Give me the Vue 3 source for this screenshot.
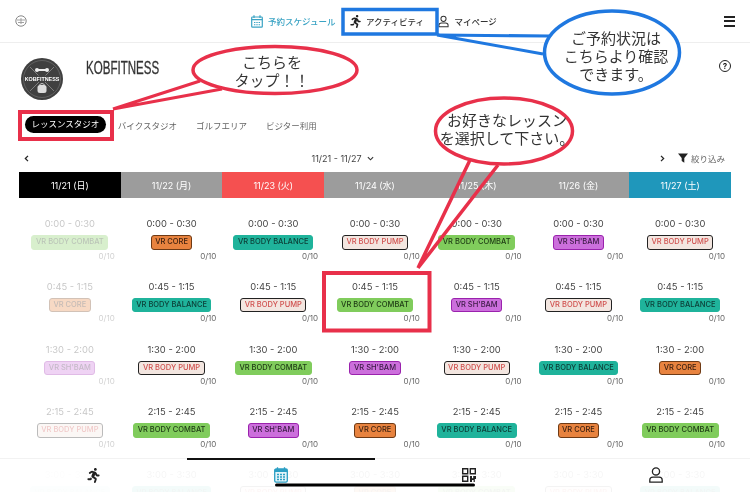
<script setup>
const tabs = ['バイクスタジオ', 'ゴルフエリア', 'ビジター利用'];

const days = [
  { label: '11/21 (日)', color: '#000000' },
  { label: '11/22 (月)', color: '#9c9c9c' },
  { label: '11/23 (火)', color: '#f55050' },
  { label: '11/24 (水)', color: '#9c9c9c' },
  { label: '11/25 (木)', color: '#9c9c9c' },
  { label: '11/26 (金)', color: '#9c9c9c' },
  { label: '11/27 (土)', color: '#1f97bb' }
];

const lessons = {
  combat: { name: 'VR BODY COMBAT', cls: 'combat' },
  core: { name: 'VR CORE', cls: 'core' },
  balance: { name: 'VR BODY BALANCE', cls: 'balance' },
  pump: { name: 'VR BODY PUMP', cls: 'pump' },
  shbam: { name: "VR SH'BAM", cls: 'shbam' }
};

const rows = [
  { time: '0:00 - 0:30', items: ['combat', 'core', 'balance', 'pump', 'combat', 'shbam', 'pump'] },
  { time: '0:45 - 1:15', items: ['core', 'balance', 'pump', 'combat', 'shbam', 'pump', 'balance'] },
  { time: '1:30 - 2:00', items: ['shbam', 'pump', 'combat', 'shbam', 'pump', 'balance', 'core'] },
  { time: '2:15 - 2:45', items: ['pump', 'combat', 'shbam', 'core', 'balance', 'core', 'combat'] },
  { time: '3:00 - 3:30', items: ['balance', 'balance', 'pump', 'core', 'combat', 'pump', 'balance'] }
];

const runner = 'M272 96c26.51 0 48-21.49 48-48S298.51 0 272 0s-48 21.49-48 48 21.49 48 48 48zM113.69 317.47l-14.8 34.52H32c-17.67 0-32 14.33-32 32s14.33 32 32 32h77.45c19.25 0 36.58-11.44 44.11-29.09l8.79-20.52-10.67-6.3c-17.32-10.23-30.06-25.37-37.99-42.61zM384 223.99h-44.03l-26.06-53.25c-12.5-25.55-35.45-44.23-61.78-50.94l-71.08-21.14c-28.3-6.8-57.77-.55-80.84 17.14l-39.67 30.41c-14.03 10.75-16.69 30.83-5.92 44.86s30.84 16.66 44.86 5.92l39.69-30.41c7.67-5.89 17.44-8 25.27-6.14l14.7 4.37-37.46 87.39c-12.62 29.48-1.31 64.01 26.3 80.31l84.98 50.17-27.47 87.73c-5.28 16.86 4.11 34.81 20.97 40.09 3.19 1 6.41 1.48 9.58 1.48 13.61 0 26.23-8.77 30.52-22.45l31.64-101.06c5.91-20.77-2.89-43.08-21.64-54.39l-61.24-36.14 31.31-78.28 20.27 41.43c8 16.34 24.92 26.89 43.11 26.89H384c17.67 0 32-14.33 32-32s-14.33-31.99-32-31.99z';
</script>

<template>
  <div class="page">
    <header class="topbar">
      <svg class="top-logo" viewBox="0 0 12 12" width="12" height="12">
        <circle cx="6" cy="6" r="5.2" fill="#fff" stroke="#888" stroke-width="1" />
        <path d="M2 5h8M3 7.5h6M6 3v6" stroke="#999" stroke-width="0.9" fill="none" />
      </svg>
      <nav class="topnav">
        <a class="navlink active">
          <svg viewBox="0 0 12 13" width="12" height="13">
            <rect x="0.7" y="2" width="10.6" height="10.2" rx="0.8" fill="none" stroke="#3aa3c4" stroke-width="1.2" />
            <path d="M3 0.3v2.6M9 0.3v2.6M0.7 4.6h10.6" stroke="#3aa3c4" stroke-width="1.2" />
            <path d="M3 7.5h1.4M5.3 7.5h1.4M7.6 7.5h1.4M3 9.8h1.4M5.3 9.8h1.4M7.6 9.8h1.4" stroke="#3aa3c4" stroke-width="1.1" />
          </svg>
          <span>予約スケジュール</span>
        </a>
        <a class="navlink">
          <svg viewBox="0 0 416 512" width="11" height="13"><path :d="runner" fill="#222" /></svg>
          <span>アクティビティ</span>
        </a>
        <a class="navlink">
          <svg viewBox="0 0 12 13" width="11" height="13">
            <circle cx="6" cy="3.6" r="2.8" fill="none" stroke="#333" stroke-width="1.1" />
            <path d="M1 12.3v-1.6c0-1.7 1.3-2.6 2.8-2.6h4.4c1.5 0 2.8 0.9 2.8 2.6v1.6z" fill="none" stroke="#333" stroke-width="1.1" />
          </svg>
          <span>マイページ</span>
        </a>
      </nav>
      <div class="burger"><i></i><i></i><i></i></div>
    </header>

    <section class="profile">
      <svg class="logo" viewBox="0 0 42 42" width="42" height="42">
        <circle cx="21" cy="21" r="21" fill="#404040" />
        <circle cx="21" cy="21" r="18.5" fill="none" stroke="#808080" stroke-width="0.5" />
        <path d="M9 9l24 24M33 9L9 33" stroke="#aaa" stroke-width="0.6" />
        <rect x="15" y="11" width="12" height="2" fill="#eee" />
        <circle cx="16" cy="12" r="2" fill="#eee" />
        <circle cx="26" cy="12" r="2" fill="#eee" />
        <rect x="3" y="17.5" width="36" height="6.5" fill="#404040" />
        <text x="21" y="23" text-anchor="middle" class="logo-text">KOBFITNESS</text>
        <path d="M18.5 27.5c0-2.5 5-2.5 5 0" fill="none" stroke="#ddd" stroke-width="1" />
        <rect x="16.5" y="27" width="9" height="8" rx="2.5" fill="#ddd" />
      </svg>
      <h1 class="brand">KOBFITNESS</h1>
      <div class="help">?</div>
    </section>

    <div class="tabs">
      <span class="tab selected">レッスンスタジオ</span>
      <span v-for="t in tabs" :key="t" class="tab">{{ t }}</span>
    </div>

    <div class="weekbar">
      <svg class="chev" viewBox="0 0 6 8" width="5" height="7"><path d="M4.8 0.8L1.6 4l3.2 3.2" fill="none" stroke="#222" stroke-width="1.5" /></svg>
      <span class="range">11/21 - 11/27 <svg viewBox="0 0 8 5" width="7" height="5"><path d="M1 1l3 3 3-3" fill="none" stroke="#333" stroke-width="1.3" /></svg></span>
      <svg class="chev right" viewBox="0 0 6 8" width="5" height="7"><path d="M1.2 0.8L4.4 4 1.2 7.2" fill="none" stroke="#222" stroke-width="1.5" /></svg>
      <span class="filter">
        <svg viewBox="0 0 10 10" width="10" height="10"><path d="M0 0.5h10L6.3 5v4.8L3.7 8V5z" fill="#222" /></svg>
        絞り込み
      </span>
    </div>

    <div class="days">
      <div v-for="d in days" :key="d.label" class="day" :style="{ background: d.color }">{{ d.label }}</div>
    </div>

    <div class="schedule">
      <template v-for="r in rows" :key="r.time">
        <div v-for="(l, i) in r.items" :key="i" class="cell" :class="{ past: i === 0 }">
          <div class="time">{{ r.time }}</div>
          <div class="chip" :class="lessons[l].cls">{{ lessons[l].name }}</div>
          <div class="count">0/10</div>
        </div>
      </template>
    </div>

    <footer class="bottomnav">
      <svg viewBox="0 0 416 512" width="13" height="15"><path :d="runner" fill="#222" /></svg>
      <svg viewBox="0 0 14 16" width="14" height="16">
        <rect x="0.7" y="2" width="12.6" height="13.2" rx="1.4" fill="#e4f4f9" stroke="#2c9fc4" stroke-width="1.3" />
        <path d="M3.5 0.2v3M10.5 0.2v3" stroke="#2c9fc4" stroke-width="1.3" />
        <rect x="0.7" y="2" width="12.6" height="3" fill="#2c9fc4" />
        <path d="M3 7.6h2M6 7.6h2M9 7.6h2M3 10h2M6 10h2M9 10h2M3 12.4h2M6 12.4h2M9 12.4h2" stroke="#2c9fc4" stroke-width="1.5" />
      </svg>
      <svg viewBox="0 0 14 14" width="14" height="14">
        <path d="M0.7 0.7h5v5h-5zM8.3 0.7h5v5h-5zM0.7 8.3h5v5h-5z" fill="none" stroke="#222" stroke-width="1.4" />
        <path d="M8 8h2v2.3h1.2V8H14v3h-1.2v3H11.6v-2H10v2H8z" fill="#222" />
      </svg>
      <svg viewBox="0 0 14 16" width="14" height="16">
        <circle cx="7" cy="4.4" r="3.6" fill="none" stroke="#222" stroke-width="1.3" />
        <path d="M0.8 15.2v-2c0-2 1.5-3.1 3.2-3.1h6c1.7 0 3.2 1.1 3.2 3.1v2z" fill="none" stroke="#222" stroke-width="1.3" />
      </svg>
    </footer>

    <svg class="marks" viewBox="0 0 750 492" width="750" height="492">
      <rect x="20" y="112" width="92" height="27" fill="none" stroke="#e8304a" stroke-width="4" />
      <path d="M113 109L200 81M113 109L222 89" fill="none" stroke="#e8304a" stroke-width="3" />
      <ellipse cx="275" cy="70" rx="82" ry="23.5" fill="#fff" stroke="#e8304a" stroke-width="3.5" />

      <rect x="343" y="9.5" width="94" height="24.5" fill="none" stroke="#1f78e0" stroke-width="3.5" />
      <path d="M437 35L549 36M437 35L543 54" fill="none" stroke="#1f78e0" stroke-width="3" />
      <ellipse cx="612" cy="52.5" rx="67.5" ry="41.5" fill="#fff" stroke="#1f78e0" stroke-width="3.5" />

      <rect x="324" y="273" width="105.5" height="57.5" fill="none" stroke="#e8304a" stroke-width="4" />
      <path d="M470 160L418 268M498 165L418 268" fill="none" stroke="#e8304a" stroke-width="3.5" />
      <ellipse cx="504" cy="131" rx="68.5" ry="33" fill="#fff" stroke="#e8304a" stroke-width="3.5" />

      <path d="M187 459H375" stroke="#111" stroke-width="1.8" />
      <path d="M276.5 485H473.5" stroke="#000" stroke-width="3" stroke-linecap="round" />
    </svg>

    <div class="note note-tap">こちらを<br />タップ！！</div>
    <div class="note note-status">ご予約状況は<br />こちらより確認<br />できます。</div>
    <div class="note note-pick">お好きなレッスン<br />を選択して下さい。</div>
  </div>
</template>

<style scoped>
.page {
  position: relative;
  width: 750px;
  height: 492px;
  overflow: hidden;
  background: #fff;
  color: #333;
  font-family: Inter, "Noto Sans CJK JP", sans-serif;
  filter: blur(0.3px);
}

.topbar {
  display: flex;
  align-items: center;
  height: 43px;
  padding: 0 15px;
  box-sizing: border-box;
  border-bottom: 1px solid #eee;
}

.top-logo {
  flex: none;
}

.topnav {
  display: flex;
  align-items: center;
  margin-left: 224px;
}

.navlink {
  display: flex;
  align-items: center;
  gap: 5px;
  margin-right: 14.5px;
  font-size: 8.5px;
  font-weight: 500;
  color: #333;
}

.navlink.active {
  color: #3aa3c4;
}

.burger {
  margin-left: auto;
  display: flex;
  flex-direction: column;
  gap: 2.5px;
}

.burger i {
  display: block;
  width: 11px;
  height: 2px;
  background: #222;
}

.profile {
  display: flex;
  padding: 15px 19px 0 21px;
  height: 37px;
}

.logo {
  flex: none;
}

.logo-text {
  font-family: "Liberation Sans", sans-serif;
  font-size: 5.4px;
  font-weight: 700;
  fill: #fff;
}

.brand {
  margin: 0 0 0 23px;
  font-family: "Liberation Sans", sans-serif;
  font-size: 17.5px;
  font-weight: 400;
  line-height: 20px;
  color: #333;
  transform: scaleX(0.66);
  transform-origin: left center;
  -webkit-text-stroke: 0.3px #333;
}

.help {
  margin: 0 0 0 auto;
  width: 10px;
  height: 10px;
  border: 1.5px solid #222;
  border-radius: 50%;
  font-size: 8px;
  font-weight: 700;
  line-height: 10px;
  text-align: center;
  color: #222;
  position: relative;
  top: 2px;
}

.tabs {
  display: flex;
  align-items: center;
  gap: 19px;
  margin-top: 21px;
  padding-left: 25px;
  height: 17px;
}

.tab {
  font-size: 8.5px;
  color: #666;
}

.tab.selected {
  padding: 0 6.5px;
  line-height: 17px;
  border-radius: 9px;
  background: #000;
  color: #fff;
  margin-right: -7px;
}

.weekbar {
  position: relative;
  display: flex;
  align-items: center;
  justify-content: center;
  height: 16px;
  margin-top: 17px;
  font-size: 9px;
  color: #444;
}

.chev {
  position: absolute;
  left: 24px;
}

.chev.right {
  left: 660px;
}

.range {
  display: flex;
  align-items: center;
  gap: 5px;
  margin-left: -65px;
}

.filter {
  position: absolute;
  left: 678px;
  display: flex;
  align-items: center;
  gap: 3px;
  font-size: 8.5px;
  color: #666;
}

.days {
  display: grid;
  grid-template-columns: repeat(7, 1fr);
  margin: 6px 19px 0;
  height: 26px;
}

.day {
  display: flex;
  align-items: center;
  justify-content: center;
  font-size: 9px;
  color: #fff;
}

.schedule {
  display: grid;
  grid-template-columns: repeat(7, 1fr);
  grid-auto-rows: 62.8px;
  margin: 19px 19px 0;
}

.cell {
  display: flex;
  flex-direction: column;
  align-items: center;
  position: relative;
}

.cell.past {
  opacity: 0.3;
}

.time {
  font-size: 9.4px;
  line-height: 14px;
  color: #444;
}

.chip {
  margin-top: 4px;
  padding: 0 3.5px;
  height: 14.5px;
  box-sizing: border-box;
  border: 1.4px solid transparent;
  border-radius: 3px;
  font-size: 7.5px;
  font-weight: 500;
  line-height: 11.7px;
  white-space: nowrap;
}

.combat {
  background: #80cc5c;
  border-color: #80cc5c;
  color: #1d3a14;
}

.core {
  background: #e8833f;
  border-color: #6e3a15;
  color: #3d2010;
}

.balance {
  background: #1fb39b;
  border-color: #1fb39b;
  color: #0c3d36;
}

.pump {
  background: #f3e6e0;
  border-color: #222;
  color: #d0504e;
}

.shbam {
  background: #cc6fdc;
  border-color: #9a22ad;
  color: #3a1a44;
}

.count {
  align-self: flex-end;
  margin: 1px 6px 0 0;
  font-size: 8px;
  line-height: 11px;
  color: #666;
}

.bottomnav {
  position: absolute;
  left: 0;
  right: 0;
  top: 458px;
  height: 34px;
  display: grid;
  grid-template-columns: repeat(4, 1fr);
  justify-items: center;
  align-items: center;
  padding-bottom: 1px;
  box-sizing: border-box;
  border-top: 1px solid #f2f2f2;
  background: rgba(255, 255, 255, 0.95);
}

.marks {
  position: absolute;
  left: 0;
  top: 0;
  pointer-events: none;
}

.note {
  position: absolute;
  font-family: "Noto Sans CJK JP", sans-serif;
  font-size: 15px;
  line-height: 18px;
  text-align: center;
  color: #333;
  white-space: nowrap;
}

.note-tap {
  left: 232px;
  top: 53px;
  width: 80px;
}

.note-status {
  left: 556px;
  top: 29px;
  width: 120px;
}

.note-pick {
  left: 437px;
  top: 111px;
  width: 140px;
}
</style>

<style>
html,
body {
  margin: 0;
  background: #fff;
}
</style>
